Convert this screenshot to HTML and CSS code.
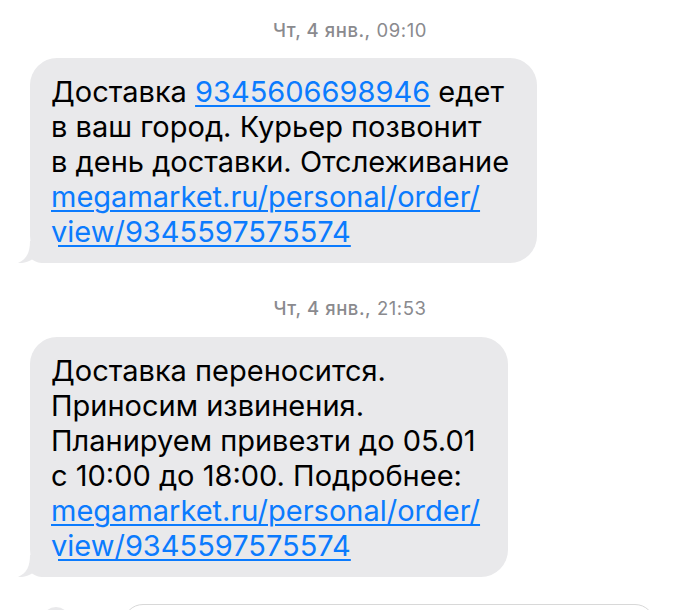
FILE: index.html
```html
<!DOCTYPE html>
<html lang="ru">
<head>
<meta charset="utf-8">
<title>Сообщения</title>
<link rel="stylesheet" href="styles.css">
</head>
<body>
<main class="thread">
  <div class="stamp stamp-first"><span class="stamp-date">Чт, 4 янв.,</span> 09:10</div>
  <div class="bubble">
    <span class="line">Доставка <a class="link" href="#">9345606698946</a> едет</span>
    <span class="line">в ваш город. Курьер позвонит</span>
    <span class="line">в день доставки. Отслеживание</span>
    <span class="line"><a class="link" href="#">megamarket.ru/personal/order/</a></span>
    <span class="line"><a class="link" href="#">view/9345597575574</a></span>
    <svg class="tail" width="40" height="22" viewBox="0 0 40 22"><path d="M12 0 C12 11 9 18 0 22 C5 22.5 10 21 14 18.5 C18 21.5 22 22 27 22 L40 22 L40 0 Z"/></svg>
  </div>
  <div class="stamp stamp-next"><span class="stamp-date">Чт, 4 янв.,</span> 21:53</div>
  <div class="bubble">
    <span class="line">Доставка переносится.</span>
    <span class="line">Приносим извинения.</span>
    <span class="line">Планируем привезти до 05.01</span>
    <span class="line">с 10:00 до 18:00. Подробнее:</span>
    <span class="line"><a class="link" href="#">megamarket.ru/personal/order/</a></span>
    <span class="line"><a class="link" href="#">view/9345597575574</a></span>
    <svg class="tail" width="40" height="22" viewBox="0 0 40 22"><path d="M12 0 C12 11 9 18 0 22 C5 22.5 10 21 14 18.5 C18 21.5 22 22 27 22 L40 22 L40 0 Z"/></svg>
  </div>
  <div class="composer">
    <div class="composer-btn"></div>
    <div class="composer-field"></div>
  </div>
</main>
</body>
</html>
```

FILE: styles.css
```css
html, body {
  margin: 0;
  padding: 0;
  height: 610px;
  overflow: hidden;
  background: #ffffff;
}

.thread {
  display: flex;
  flex-direction: column;
  font-family: Inter, "Liberation Sans", Arial, sans-serif;
}

.stamp {
  height: 22px;
  line-height: 22px;
  font-size: 18.5px;
  letter-spacing: 0.55px;
  color: #8a8a8e;
  text-align: center;
}

.stamp-date {
  font-weight: 500;
}

.stamp-first {
  margin-top: 19px;
}

.stamp-next {
  margin-top: 34px;
}

.bubble {
  position: relative;
  align-self: flex-start;
  margin-left: 30px;
  margin-top: 17px;
  padding: 16px 28px 14px 21px;
  background: #e9e9eb;
  border-radius: 27px;
  font-size: 29px;
  line-height: 35px;
  color: #000;
}

.stamp-next + .bubble {
  margin-top: 18px;
}

.line {
  display: block;
  white-space: nowrap;
}

.link {
  color: #0b7bfe;
  text-decoration: underline;
  text-decoration-thickness: 1.5px;
  text-underline-offset: 3px;
}

.tail {
  position: absolute;
  left: -12px;
  bottom: 0;
  fill: #e9e9eb;
}

.composer {
  display: flex;
  align-items: flex-start;
  margin-top: 27px;
  padding-left: 42px;
}

.composer-btn {
  width: 28px;
  height: 28px;
  margin-top: 3px;
  border-radius: 50%;
  background: #e9e9eb;
}

.composer-field {
  width: 530px;
  height: 40px;
  margin-left: 53px;
  border: 1.5px solid #d8d8d8;
  border-radius: 20px;
}
```
